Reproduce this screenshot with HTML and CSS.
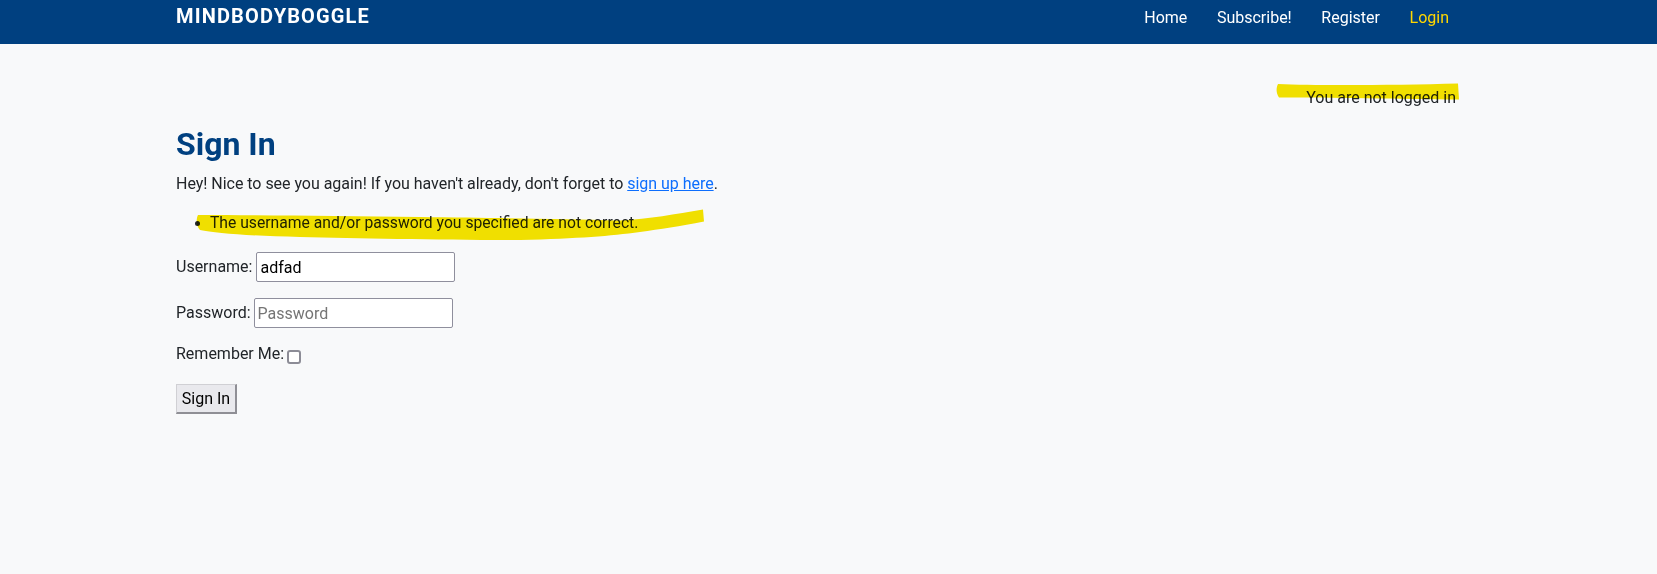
FILE: index.html
```html
<!DOCTYPE html>
<html lang="en">
<head>
<meta charset="utf-8">
<title>Sign In - MindBodyBoggle</title>
<link rel="stylesheet" href="styles.css">
</head>
<body>
<header class="navbar">
  <div class="container nav-inner">
    <a class="brand" href="#">MINDBODYBOGGLE</a>
    <nav class="nav-links">
      <a class="nav-link" href="#">Home</a>
      <a class="nav-link" href="#">Subscribe!</a>
      <a class="nav-link" href="#">Register</a>
      <a class="nav-link active" href="#">Login</a>
    </nav>
  </div>
</header>
<main class="container main">
  <div class="status">You are not logged in</div>
  <h1 class="title">Sign In</h1>
  <p class="intro">Hey! Nice to see you again! If you haven't already, don't forget to <a class="link" href="#">sign up here</a>.</p>
  <ul class="errors">
    <li>The username and/or password you specified are not correct.</li>
  </ul>
  <form class="form">
    <div class="row"><label for="u">Username:</label> <input class="field" id="u" type="text" value="adfad"></div>
    <div class="row row-pw"><label for="p">Password:</label> <input class="field" id="p" type="password" placeholder="Password"></div>
    <div class="row row-check"><label for="r">Remember Me:</label> <input class="check" id="r" type="checkbox"></div>
    <div class="row row-btn"><button class="btn" type="button">Sign In</button></div>
  </form>
</main>
<svg class="marker" width="1657" height="574" viewBox="0 0 1657 574" aria-hidden="true">
  <path d="M1278,84 C1320,86 1400,85 1458,83.5 L1459,99.5 C1400,99 1330,97.5 1279,97.5 C1276,93 1276,88 1278,84 Z"/>
  <path d="M198,215 C260,215 340,216 420,217 C500,218 560,219 620,220.5 C650,219 675,214 703,209.5 L704,221.5 C680,226.5 660,229 640,232 C610,236 580,238.5 520,240 C440,240 360,238.5 300,237 C250,236 215,233 200,230 C196,226 196,219 198,215 Z"/>
</svg>
</body>
</html>
```

FILE: styles.css
```css
html, body {
  margin: 0;
  padding: 0;
}
body {
  background: #f8f9fa;
  color: #212529;
  font-family: Roboto, "Liberation Sans", Arial, sans-serif;
  font-size: 16px;
  line-height: 24px;
  min-height: 574px;
  position: relative;
}
.container {
  margin-left: 176px;
  width: 1281px;
}
.navbar {
  background: #004080;
  height: 44px;
  box-sizing: border-box;
}
.nav-inner {
  display: flex;
  justify-content: space-between;
  align-items: baseline;
  padding-top: 1px;
}
.brand {
  color: #fff;
  font-weight: 700;
  font-size: 20px;
  line-height: 30px;
  letter-spacing: 1.15px;
  text-decoration: none;
}
.nav-links {
  display: flex;
}
.nav-link {
  color: #fff;
  text-decoration: none;
  padding: 0 14.8px;
}
.nav-link:last-child {
  padding-right: 8px;
}
.nav-link.active {
  color: #ffd700;
}
.main {
  padding-top: 41.5px;
}
.status {
  text-align: right;
  padding-right: 1px;
}
.title {
  color: #004080;
  font-size: 32px;
  font-weight: 700;
  line-height: 38px;
  margin: 15.5px 0 0;
}
.intro {
  margin: 8.5px 0 0;
  letter-spacing: -0.03px;
}
.link {
  color: #0d6efd;
}
.errors {
  margin: 15px 0 0;
  padding-left: 34px;
  list-style: none;
}
.errors li {
  font-size: 15.7px;
}
.errors li::before {
  content: "";
  display: inline-block;
  width: 5px;
  height: 5px;
  border-radius: 50%;
  background: #212529;
  margin-left: -15px;
  margin-right: 10px;
  vertical-align: middle;
}
.form {
  margin-top: 17.5px;
}
.row {
  display: flex;
  align-items: center;
  height: 30px;
}
.row label {
  margin-right: 4px;
}
.row-pw {
  margin-top: 16px;
}
.row-pw label {
  margin-right: 3px;
}
.field {
  box-sizing: border-box;
  width: 199px;
  height: 30px;
  border: 1px solid #8f8f9d;
  border-radius: 2px;
  padding: 1px 3px;
  font-family: Roboto, "Liberation Sans", Arial, sans-serif;
  font-size: 16px;
  color: #000;
  background: #fff;
}
.field::placeholder {
  color: #757575;
}
.row-check {
  margin-top: 14px;
  height: 24px;
  align-items: flex-start;
}
.row-check label {
  margin-right: 2.5px;
}
.check {
  appearance: none;
  -webkit-appearance: none;
  box-sizing: border-box;
  width: 14px;
  height: 14px;
  margin: 8px 0 0 0;
  border: 2px solid #8c8c96;
  border-radius: 3px;
  background: #fff;
}
.row-btn {
  margin-top: 17.5px;
}
.btn {
  box-sizing: border-box;
  height: 30px;
  width: 61px;
  padding: 0 4px;
  font-family: Roboto, "Liberation Sans", Arial, sans-serif;
  font-size: 16px;
  color: #000;
  background: #e9e9ed;
  border-style: solid;
  border-width: 1px 2px 2px 1px;
  border-color: #d0d0d4 #8f8f95 #8f8f95 #d0d0d4;
  border-radius: 0;
}
.marker {
  position: absolute;
  left: 0;
  top: 0;
  pointer-events: none;
  mix-blend-mode: multiply;
}
.marker path {
  fill: #f7e500;
}
```
